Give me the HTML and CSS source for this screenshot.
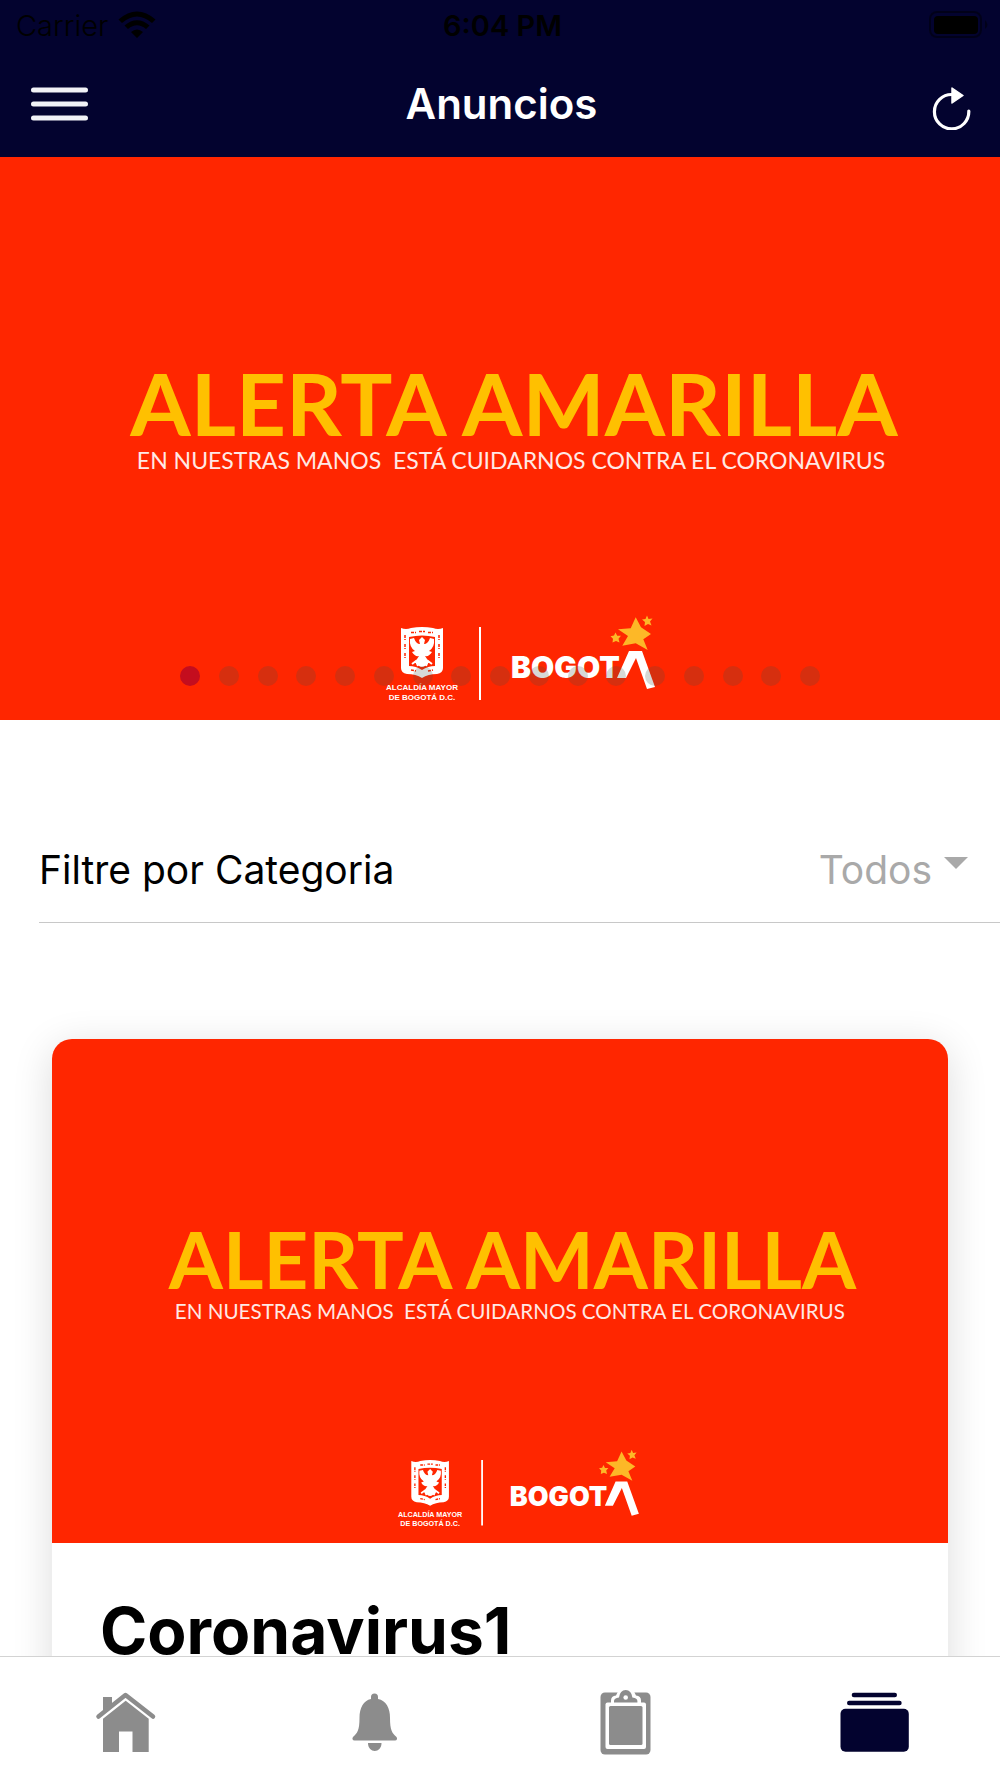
FILE: index.html
```html
<!DOCTYPE html>
<html lang="es">
<head>
<meta charset="utf-8">
<meta name="viewport" content="width=device-width, initial-scale=1">
<title>Anuncios</title>
<link rel="stylesheet" href="styles.css">
</head>
<body>

<header class="topbar">
  <div class="status">
    <div class="carrier">
      <span>Carrier</span>
      <svg width="38" height="28" viewBox="0 0 38 28" aria-hidden="true">
        <path d="M0.500 8.500Q19-7.500 37.500 8.500L34 12Q19-1 4 12zM6.500 14.500Q19 4 31.500 14.500L28 18Q19 10.500 10 18zM13 21Q19 16 25 21L19 27z"/>
      </svg>
    </div>
    <time class="clock">6:04 PM</time>
    <svg class="battery" width="60" height="28" viewBox="0 0 60 28" aria-hidden="true">
      <rect x="1" y="1" width="51" height="25" rx="7" fill="none" stroke="#000" stroke-opacity=".45" stroke-width="2"/>
      <rect x="5" y="5" width="44" height="18" rx="4"/>
      <path d="M56 9q5 5 0 9z" fill-opacity=".45"/>
    </svg>
  </div>
  <div class="toolbar">
    <button class="icon-btn" type="button" aria-label="Menú">
      <svg width="57" height="34" viewBox="0 0 57 34">
        <path d="M2.500 3h52M2.500 17h52M2.500 31h52" stroke="#f1f2f7" stroke-width="5" stroke-linecap="round"/>
      </svg>
    </button>
    <h1>Anuncios</h1>
    <button class="icon-btn refresh" type="button" aria-label="Actualizar">
      <svg width="40" height="44" viewBox="0 0 40 44">
        <path d="M20 8.500A17.200 17.200 0 1 0 36.800 25" fill="none" stroke="#fff" stroke-width="3.200" stroke-linecap="round"/>
        <path d="M20 2L31 9.500 20 17z" fill="#fff" stroke="#fff" stroke-width="1.500" stroke-linejoin="round"/>
      </svg>
    </button>
  </div>
</header>

<main class="content">
  <section class="slider">
    <svg class="banner" viewBox="0 0 1000 563">
      <!-- La tarjeta reutiliza este mismo banner -->
      <g id="banner">
        <rect width="1000" height="563" fill="#ff2600"/>
        <text class="banner-title" x="514" y="279">ALERTA AMARILLA</text>
        <text class="banner-sub" x="511" y="312">EN NUESTRAS MANOS&#160; ESTÁ CUIDARNOS CONTRA EL CORONAVIRUS</text>
        <!-- escudo -->
        <path d="M401 471q5 2 10 0q11-2 22 0q5 2 10 0v40q0 5-6 6q-9 0-15 4q-6-4-15-4q-6-1-6-6z" fill="#fff"/>
        <path d="M409 480q13-3 26 0v29q-7 0-13 4q-6-4-13-4z" fill="#ff2600"/>
        <path d="M422 480l3 3-1 4q4 0 6-6l4 1q1 8-5 12l3 1q-3 5-7 4l4 6q-4 5-7 5t-7-5l4-6q-4 1-7-4l3-1q-6-4-5-12l4-1q2 6 6 6l-1-4z" fill="#fff"/>
        <path d="M411 475.500h5m3-1h6m3 1h5M405 478v5m0 4v5m0 4v5m34-23v5m0 4v5m0 4v5M411 513l5 1m12 0l5-1" fill="none" stroke="#ff2600" stroke-width="1.500" stroke-dasharray="3 1"/>
        <path d="M412 507l4-3 2 5m14-2l-4-3-2 5" fill="none" stroke="#fff" stroke-width="2"/>
        <text class="banner-small" x="422" y="533">ALCALDÍA MAYOR</text>
        <text class="banner-small" x="422" y="543">DE BOGOTÁ D.C.</text>
        <path d="M480 470v73" stroke="#fff" stroke-width="2"/>
        <text class="banner-logo" x="511" y="521">BOGOT</text>
        <path d="M617 521l12-27h13l13 36-8 2-11-31-10 20z" fill="#fff"/>
        <path d="M635.700 460.300l5.300 10 10 6.700-7.700 5.300 4.400 10.700-12-6.700-13.400 2.400 5.700-9.700-10-6.700 12.700-1z" fill="#fdb827"/>
        <path d="M647 458.500l1.500 3.500 4-.500-2.500 3 1.500 4-3.500-1.500-3.500 2 .5-4-3-2.500 3.500-.5zM615.500 475.500l1.700 3.200 3.800 0-2.500 3 1 3.800-3.500-1.500-3.500 1.500 .5-3.800-2.500-2.500 3.500-.7z" fill="#fdb827"/>
      </g>
    </svg>
    <div class="dots">
      <i class="dot active"></i><i class="dot"></i><i class="dot"></i><i class="dot"></i><i class="dot"></i><i class="dot"></i><i class="dot"></i><i class="dot"></i><i class="dot"></i><i class="dot"></i><i class="dot"></i><i class="dot"></i><i class="dot"></i><i class="dot"></i><i class="dot"></i><i class="dot"></i><i class="dot"></i>
    </div>
  </section>

  <div class="filter">
    <label for="categoria">Filtre por Categoria</label>
    <div class="select">
      <select id="categoria">
        <option>Todos</option>
      </select>
      <span class="caret"></span>
    </div>
  </div>

  <article class="card">
    <svg class="banner" viewBox="0 0 1000 563"><use href="#banner"/></svg>
    <h2>Coronavirus1</h2>
  </article>
</main>

<nav class="tabs">
  <a href="#inicio" aria-label="Inicio">
    <svg width="80" height="80" viewBox="0 0 80 80">
      <path d="M18 15h9v7.500l-9 8z"/>
      <path d="M13.500 34.500L40.500 13l27.500 21.500" fill="none" stroke="currentColor" stroke-width="4.500" stroke-linecap="round" stroke-linejoin="round"/>
      <path d="M40.700 18.700l23 18V70H47.500V49.500H34V70H18V36.700z"/>
    </svg>
  </a>
  <a href="#alertas" aria-label="Alertas">
    <svg width="80" height="80" viewBox="0 0 80 80">
      <path d="M36 17V15a3.500 3.500 0 0 1 7 0v2C51 18.500 55 26 55 36c0 12 2 15 6.500 19 1.200 1.500.5 3.500-1.500 3.500H19.500c-2 0-2.700-2-1.500-3.500 4.500-4 6.500-7 6.500-19 0-10 4-17.500 11.500-19z"/>
      <path d="M33 61h13.500c0 10.500-13.500 10.500-13.500 0z"/>
    </svg>
  </a>
  <a href="#tareas" aria-label="Tareas">
    <svg width="80" height="80" viewBox="0 0 80 80">
      <rect x="15.500" y="10.500" width="50" height="62" rx="4.500"/>
      <rect x="20.500" y="20.500" width="40.500" height="46.500" rx="2" fill="#fff"/>
      <rect x="24" y="24" width="33.500" height="39" rx="1.500"/>
      <path d="M26 21v-2.500q0-4.500 5-5l2-4h16l2 4q5 .5 5 5V21z" fill="#fff"/>
      <path d="M29 20.500V19q0-3 5-3.500 1-7.500 6.700-7.500t6.700 7.500q5 .5 5 3.500v1.500z"/>
      <circle cx="40.700" cy="15.500" r="2.300" fill="#fff"/>
    </svg>
  </a>
  <a class="current" href="#anuncios" aria-label="Anuncios" aria-current="page">
    <svg width="80" height="80" viewBox="0 0 80 80">
      <rect x="16.700" y="10.700" width="45.300" height="4.500" rx="2.200"/>
      <rect x="12" y="18.800" width="54.700" height="4.500" rx="2.200"/>
      <rect x="5.500" y="26.700" width="68.300" height="43" rx="5"/>
    </svg>
  </a>
</nav>

</body>
</html>
```
FILE: styles.css
```css
* {
    box-sizing: border-box;
}
body {
    margin: 0;
    height: 100vh;
    display: flex;
    flex-direction: column;
    background: #fff;
    color: #000;
    font-family: Inter, "Liberation Sans", sans-serif;
}
h1, h2 {
    margin: 0;
}
svg {
    display: block;
}

/* Cabecera */
.topbar {
    flex: none;
    background: #03032f;
}
.status {
    display: grid;
    grid-template-columns: 1fr auto 1fr;
    align-items: center;
    height: 50px;
    padding: 0 11px 0 16px;
    font-size: 29px;
}
.carrier {
    display: flex;
    align-items: center;
    gap: 10px;
    font-weight: 300;
}
.clock {
    font-weight: 600;
}
.battery {
    justify-self: end;
}
.toolbar {
    display: grid;
    grid-template-columns: 1fr auto 1fr;
    align-items: center;
    height: 107px;
    padding: 0 28px 0 31px;
}
.toolbar h1 {
    color: #fff;
    font-size: 42px;
    font-weight: 600;
}
.icon-btn {
    justify-self: start;
    padding: 0;
    border: none;
    background: none;
    cursor: pointer;
}
.refresh {
    justify-self: end;
    padding-top: 8px;
}

/* Contenido */
.content {
    flex: 1;
    min-height: 0;
    overflow-y: auto;
    scrollbar-width: none;
}
.banner {
    width: 100%;
    height: auto;
}
.banner-title {
    fill: #ffc000;
    font: 700 87px Lato, sans-serif;
    text-anchor: middle;
}
.banner-sub {
    fill: #ffe9e5;
    font: 400 23px Lato, sans-serif;
    text-anchor: middle;
}
.banner-small {
    fill: #fff;
    font: 700 8px "Liberation Sans", sans-serif;
    text-anchor: middle;
}
.banner-logo {
    fill: #fff;
    font: 900 30px Inter, sans-serif;
}
.slider {
    position: relative;
}
.dots {
    position: absolute;
    left: 18%;
    right: 18%;
    bottom: 34px;
    display: flex;
    justify-content: space-between;
}
.dot {
    width: 20px;
    height: 20px;
    border-radius: 50%;
    background: rgba(70, 80, 70, 0.22);
}
.dot.active {
    background: #c40d1e;
}
.filter {
    display: flex;
    justify-content: space-between;
    align-items: center;
    height: 123px;
    margin: 80px 0 116px 39px;
    padding: 16px 32px 0 0;
    border-bottom: 1px solid #c8c8c8;
    font-size: 39px;
}
.select {
    display: flex;
    align-items: center;
    gap: 12px;
}
.select select {
    padding: 0;
    border: none;
    background: none;
    appearance: none;
    color: #a9a9a9;
    font: inherit;
    text-align: right;
}
.caret {
    margin-bottom: 12px;
    border: 12px solid transparent;
    border-top-color: #a9a9a9;
    border-bottom: none;
}
.card {
    margin: 0 52px 40px;
    border-radius: 20px;
    background: #fff;
    box-shadow: 0 8px 40px rgba(0, 0, 0, 0.14);
}
.card .banner {
    border-radius: 20px 20px 0 0;
}
.card h2 {
    padding: 48px;
    font-size: 64px;
    font-weight: 700;
    line-height: 80px;
}

/* Barra inferior */
.tabs {
    flex: none;
    display: grid;
    grid-template-columns: repeat(4, 1fr);
    padding: 25px 0 16px;
    border-top: 1px solid #d3d3d3;
    background: #fff;
}
.tabs a {
    display: flex;
    justify-content: center;
    color: #8c8c8c;
    fill: currentColor;
}
.tabs .current {
    color: #03032f;
}
```
